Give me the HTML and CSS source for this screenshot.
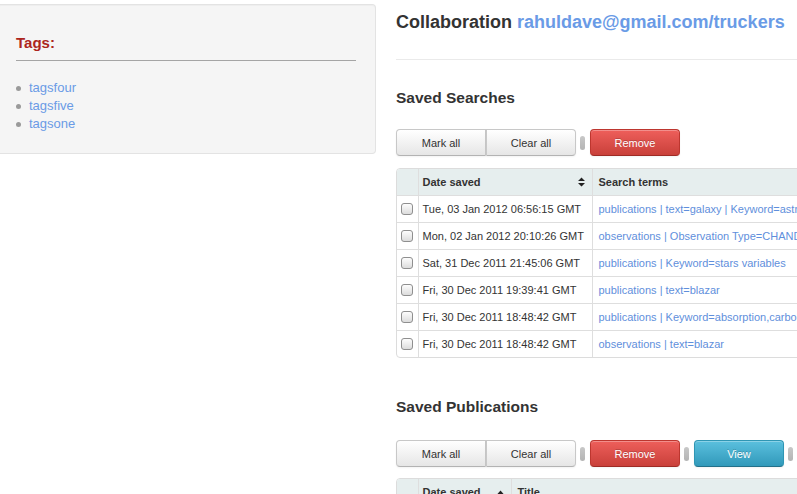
FILE: index.html
```html
<!DOCTYPE html>
<html lang="en">
<head>
<meta charset="utf-8">
<title>Collaboration</title>
<link rel="stylesheet" href="styles.css">
</head>
<body>
<div class="page">
  <aside class="sidebar">
    <h3 class="tags-title">Tags:</h3>
    <hr class="tags-rule">
    <ul class="tag-list">
      <li><a href="#">tagsfour</a></li>
      <li><a href="#">tagsfive</a></li>
      <li><a href="#">tagsone</a></li>
    </ul>
  </aside>

  <main class="main">
    <h1 class="title">Collaboration <a href="#">rahuldave@gmail.com/truckers</a></h1>
    <hr class="title-rule">

    <h2 class="section-title first">Saved Searches</h2>
    <div class="toolbar">
      <div class="btn-group">
        <button class="btn">Mark all</button>
        <button class="btn">Clear all</button>
      </div>
      <span class="grip"></span>
      <button class="btn btn-danger">Remove</button>
    </div>
    <div class="table-wrap">
      <table class="data">
        <colgroup><col class="c-check"><col class="c-date"><col></colgroup>
        <thead>
          <tr>
            <th class="check"></th>
            <th class="date"><span class="th-inner">Date saved
              <svg class="sort" width="7" height="10" viewBox="0 0 7 10"><path d="M3.5 0.5L7 4H0z M3.5 9.5L7 6H0z" fill="#222"/></svg></span></th>
            <th class="terms">Search terms</th>
          </tr>
        </thead>
        <tbody>
          <tr><td class="check"><input type="checkbox"></td><td class="date">Tue, 03 Jan 2012 06:56:15 GMT</td><td class="terms"><a href="#">publications | text=galaxy | Keyword=astronomy</a></td></tr>
          <tr><td class="check"><input type="checkbox"></td><td class="date">Mon, 02 Jan 2012 20:10:26 GMT</td><td class="terms"><a href="#">observations | Observation Type=CHANDRA</a></td></tr>
          <tr><td class="check"><input type="checkbox"></td><td class="date">Sat, 31 Dec 2011 21:45:06 GMT</td><td class="terms"><a href="#">publications | Keyword=stars variables</a></td></tr>
          <tr><td class="check"><input type="checkbox"></td><td class="date">Fri, 30 Dec 2011 19:39:41 GMT</td><td class="terms"><a href="#">publications | text=blazar</a></td></tr>
          <tr><td class="check"><input type="checkbox"></td><td class="date">Fri, 30 Dec 2011 18:48:42 GMT</td><td class="terms"><a href="#">publications | Keyword=absorption,carbon</a></td></tr>
          <tr class="last"><td class="check"><input type="checkbox"></td><td class="date">Fri, 30 Dec 2011 18:48:42 GMT</td><td class="terms"><a href="#">observations | text=blazar</a></td></tr>
        </tbody>
      </table>
    </div>

    <h2 class="section-title second">Saved Publications</h2>
    <div class="toolbar second-toolbar">
      <div class="btn-group">
        <button class="btn">Mark all</button>
        <button class="btn">Clear all</button>
      </div>
      <span class="grip"></span>
      <button class="btn btn-danger">Remove</button>
      <span class="grip"></span>
      <button class="btn btn-info">View</button>
      <span class="grip"></span>
    </div>
    <div class="table-wrap second-table">
      <table class="data">
        <colgroup><col class="c-check"><col class="c-date2"><col></colgroup>
        <thead>
          <tr>
            <th class="check"></th>
            <th class="date"><span class="th-inner">Date saved
              <svg class="sort up" width="7" height="5" viewBox="0 0 7 5"><path d="M3.5 0.5L7 4.5H0z" fill="#222"/></svg></span></th>
            <th class="terms">Title</th>
          </tr>
        </thead>
        <tbody>
          <tr><td class="check"><input type="checkbox"></td><td class="date">Tue, 03 Jan 2012</td><td class="terms"><a href="#">publication</a></td></tr>
        </tbody>
      </table>
    </div>
  </main>
</div>
</body>
</html>
```

FILE: styles.css
```css
html, body {
  margin: 0;
  padding: 0;
  overflow: hidden;
  background: #fff;
}
body {
  font-family: "Liberation Sans", Arial, Helvetica, sans-serif;
  color: #333;
  width: 797px;
  height: 494px;
}
a {
  color: #6a9be6;
  text-decoration: none;
}

.page {
  display: flex;
  align-items: flex-start;
  gap: 20px;
}

/* Sidebar well */
.sidebar {
  flex: none;
  box-sizing: border-box;
  width: 376px;
  margin-top: 4px;
  background: #f5f5f5;
  border: 1px solid #e3e3e3;
  border-left: 0;
  border-radius: 0 4px 4px 0;
  box-shadow: inset 0 1px 1px rgba(0,0,0,0.03);
  padding: 29px 19px 20px 16px;
}
.tags-title {
  margin: 0;
  font-size: 15px;
  line-height: 18px;
  font-weight: bold;
  color: #ac251d;
}
.tags-rule {
  margin: 8px 0 0;
  border: 0;
  border-top: 1px solid #a5a5a5;
  height: 0;
}
.tag-list {
  list-style: none;
  margin: 18px 0 0;
  padding: 0;
}
.tag-list li {
  display: flex;
  align-items: center;
  font-size: 13px;
  line-height: 18px;
}
.tag-list li::before {
  content: "";
  width: 5px;
  height: 5px;
  border-radius: 50%;
  background: #9a9a9a;
  margin: 1px 8px 0 0;
}

/* Main column */
.main {
  flex: none;
  width: 620px;
}
.title {
  margin: 0;
  padding-top: 10px;
  font-size: 18px;
  line-height: 24px;
  font-weight: bold;
  color: #333;
}
.title-rule {
  margin: 25px 0 0;
  border: 0;
  border-top: 1px solid #eaeaea;
  height: 0;
}
.section-title {
  margin: 0;
  font-size: 15.5px;
  line-height: 20px;
  font-weight: bold;
  color: #333;
}
.section-title.first { margin-top: 28px; }
.section-title.second { margin-top: 39px; }

.toolbar {
  display: flex;
  align-items: center;
  margin-top: 21px;
}
.toolbar.second-toolbar { margin-top: 23px; }
.btn-group {
  display: flex;
}
.btn {
  box-sizing: border-box;
  width: 90px;
  height: 27px;
  padding: 0;
  font-family: "Liberation Sans", Arial, sans-serif;
  font-size: 11px;
  color: #333;
  background: linear-gradient(#ffffff, #e6e6e6);
  border: 1px solid #c8c8c8;
  border-bottom-color: #b3b3b3;
  border-radius: 4px;
  box-shadow: inset 0 1px 0 rgba(255,255,255,0.3), 0 1px 2px rgba(0,0,0,0.05);
}
.btn-group .btn:first-child { border-radius: 4px 0 0 4px; }
.btn-group .btn:last-child { border-radius: 0 4px 4px 0; margin-left: 0; }
.btn-danger {
  color: #fff;
  background: linear-gradient(#ee5f5b, #c9403a);
  border-color: #bd362f #bd362f #9e2b25;
  text-shadow: 0 -1px 0 rgba(0,0,0,0.2);
}
.btn-info {
  color: #fff;
  background: linear-gradient(#5bc0de, #3199ba);
  border-color: #2f96b4 #2f96b4 #237089;
  text-shadow: 0 -1px 0 rgba(0,0,0,0.2);
}
.grip {
  flex: none;
  width: 5px;
  height: 14px;
  margin: 0 5px 0 4px;
  border-radius: 3px;
  background: linear-gradient(#c8c8c8, #b4b4b4);
}

/* Tables */
.table-wrap {
  margin-top: 12px;
  border: 1px solid #dcdcdc;
  border-radius: 4px;
  overflow: hidden;
  width: 600px;
}
.table-wrap.second-table { margin-top: 11px; }
.data {
  width: 100%;
  table-layout: fixed;
  border-collapse: collapse;
  font-size: 11px;
}
.c-check { width: 21px; }
.c-date { width: 174px; }
.c-date2 { width: 93px; }
.data th, .data td {
  border-right: 1px solid #dedede;
  border-bottom: 1px solid #dedede;
  text-align: left;
  padding: 0 6px;
  white-space: nowrap;
  overflow: hidden;
}
.data th:last-child, .data td:last-child { border-right: 0; }
.data tr.last td { border-bottom: 0; }
.data th {
  height: 26px;
  background: #e6eeee;
  font-weight: bold;
  color: #333;
}
.data td {
  height: 26px;
  color: #333;
}
.data .date { padding: 0 7px 0 4px; }
.data .check { padding: 0; text-align: center; }
.data td.terms { font-size: 11px; }
.data td.terms a { color: #5f8fdc; }
.th-inner {
  display: flex;
  justify-content: space-between;
  align-items: center;
}
.sort { flex: none; }
.data input[type="checkbox"] {
  appearance: none;
  -webkit-appearance: none;
  display: block;
  margin: 0 auto;
  width: 12px;
  height: 12px;
  box-sizing: border-box;
  border: 1px solid #8f8f8f;
  border-radius: 3px;
  background: linear-gradient(#fdfdfd, #dcdcdc);
  box-shadow: 0 1px 0 rgba(255,255,255,0.6);
}
```
